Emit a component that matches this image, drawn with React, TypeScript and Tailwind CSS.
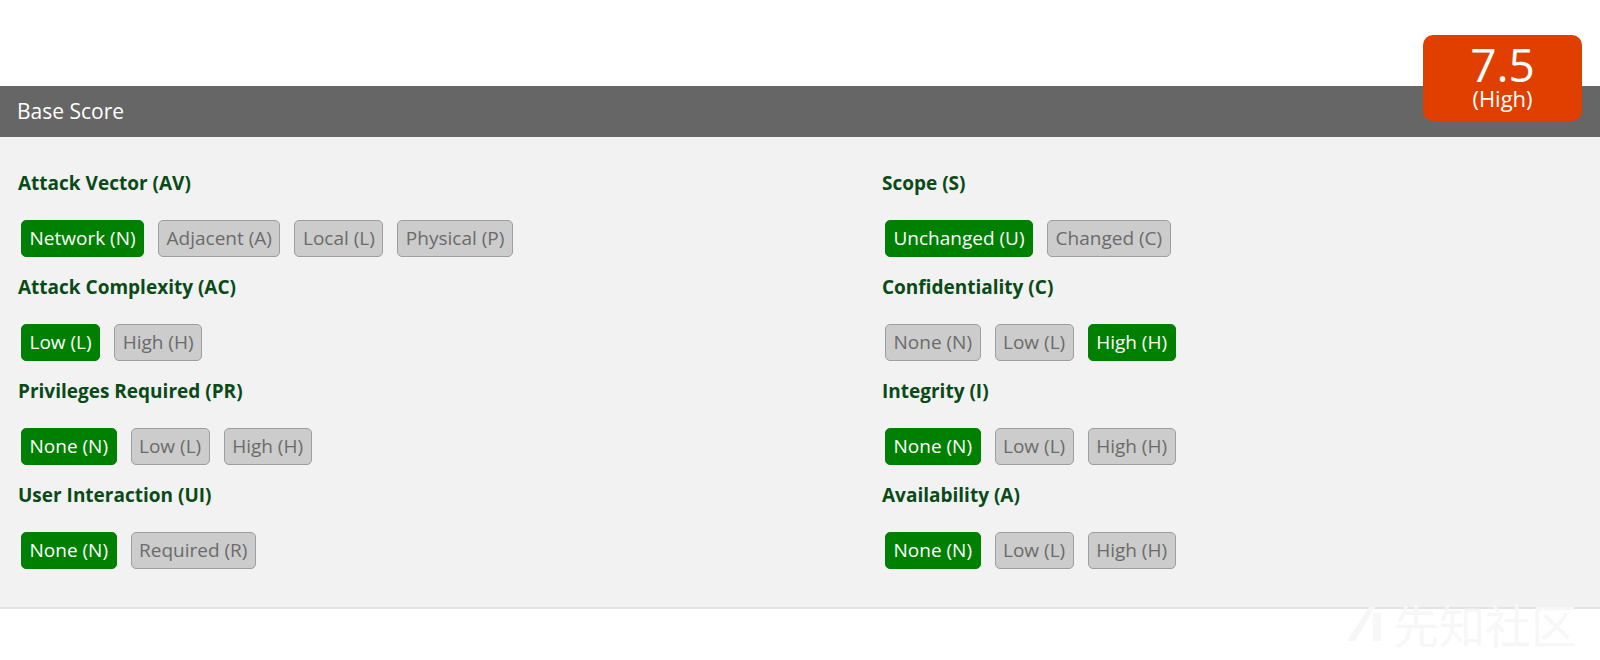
import React from 'react';

interface Metric {
  label: string;
  options: string[];
  selected: number;
}

const LEFT: Metric[] = [
  { label: 'Attack Vector (AV)', options: ['Network (N)', 'Adjacent (A)', 'Local (L)', 'Physical (P)'], selected: 0 },
  { label: 'Attack Complexity (AC)', options: ['Low (L)', 'High (H)'], selected: 0 },
  { label: 'Privileges Required (PR)', options: ['None (N)', 'Low (L)', 'High (H)'], selected: 0 },
  { label: 'User Interaction (UI)', options: ['None (N)', 'Required (R)'], selected: 0 },
];

const RIGHT: Metric[] = [
  { label: 'Scope (S)', options: ['Unchanged (U)', 'Changed (C)'], selected: 0 },
  { label: 'Confidentiality (C)', options: ['None (N)', 'Low (L)', 'High (H)'], selected: 2 },
  { label: 'Integrity (I)', options: ['None (N)', 'Low (L)', 'High (H)'], selected: 0 },
  { label: 'Availability (A)', options: ['None (N)', 'Low (L)', 'High (H)'], selected: 0 },
];

function MetricGroup({ metric }: { metric: Metric }) {
  return (
    <div className="pb-[18px]">
      <h3 className="text-[19px] leading-[24px] font-bold text-[#0a4a17]">{metric.label}</h3>
      <div className="mt-[25px] flex gap-[14px] pl-[3px]">
        {metric.options.map((opt, i) =>
          i === metric.selected ? (
            <span
              key={opt}
              className="flex h-[37px] items-center rounded-[5px] border border-[#008000] bg-[#008000] px-[7.5px] text-[19px] text-white"
            >
              {opt}
            </span>
          ) : (
            <span
              key={opt}
              className="flex h-[37px] items-center rounded-[5px] border border-[#9e9e9e] bg-[#cccccc] px-[7.5px] text-[19px] text-[#6b6b6b]"
            >
              {opt}
            </span>
          ),
        )}
      </div>
    </div>
  );
}

export default function App() {
  return (
    <div className="relative h-[660px] w-[1600px] overflow-hidden bg-white font-['Open_Sans',sans-serif]">
      <div className="h-[86px]" />
      <div className="flex h-[51px] items-center bg-[#666666] px-[17px] text-[21px] text-white">Base Score</div>

      <div className="grid grid-cols-[865px_1fr] border-b-2 border-[#e3e3e3] bg-[#f2f2f2] pb-[20px] pt-[34px]">
        <div className="pl-[18px]">
          {LEFT.map((m) => (
            <MetricGroup key={m.label} metric={m} />
          ))}
        </div>
        <div className="pl-[17px]">
          {RIGHT.map((m) => (
            <MetricGroup key={m.label} metric={m} />
          ))}
        </div>
      </div>

      {/* score badge overlaps the header bar */}
      <div className="absolute left-[1423px] top-[35px] flex h-[86px] w-[159px] flex-col items-center rounded-[10px] bg-[#e03f00] pt-[9px] text-white">
        <span className="text-[46px] leading-[40px]">7.5</span>
        <span className="text-[22px] leading-[28px]">(High)</span>
      </div>

      {/* faint watermark */}
      <div className="absolute left-[1343px] top-[600px] flex items-center gap-[10px]">
        <svg width="40" height="40" viewBox="0 0 40 40">
          <path d="M4 38 L26 4 L32 4 L12 38 Z" fill="#f6f6f6" />
          <rect x="30" y="10" width="8" height="28" fill="#f8f8f8" />
        </svg>
        <span className="text-[46px] leading-[46px] text-[#f7f7f7] font-['Noto_Sans_CJK_SC',sans-serif]">先知社区</span>
      </div>
    </div>
  );
}
